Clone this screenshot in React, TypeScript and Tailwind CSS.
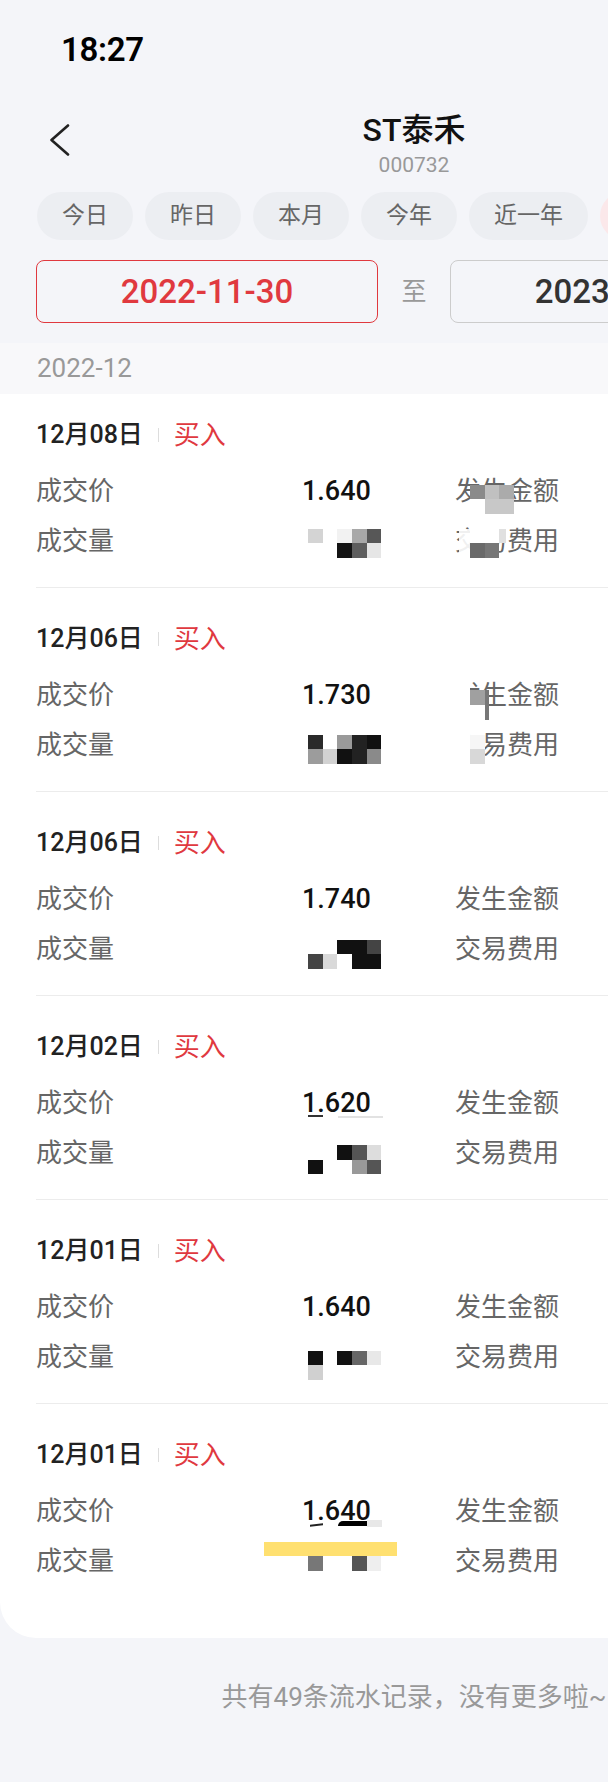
import type { ReactNode } from 'react';

type Trade = {
  date: string;
  price: string;
  amount: string;
  fee: string;
  volTop: string;
  vol: string[];
  priceMarks?: ReactNode;
  volMarks?: ReactNode;
  amountMask?: ReactNode;
  feeMask?: ReactNode;
};

const chips = ['今日', '昨日', '本月', '今年', '近一年', '自定义'];

const trades: Trade[] = [
  {
    date: '12月08日',
    price: '1.640',
    amount: '3,280.00',
    fee: '5.00',
    volTop: 'mt-[2.7px]',
    vol: ['bg-[#d4d4d4]', '', 'bg-[#f2f2f2]', 'bg-[#a8a8a8]', 'bg-[#575757]', '', '', 'bg-[#141414]', 'bg-[#5e5e5e]', 'bg-[#e6e6e6]'],
    amountMask: (
      <>
        <div className="absolute left-[15px] top-[8.6px] h-[14.7px] w-[14.7px] bg-[#8a8a8a]" />
        <div className="absolute left-[29.7px] top-[8.6px] h-[14.7px] w-[14.7px] bg-[#c0c0c0]" />
        <div className="absolute left-[44.4px] top-[8.6px] h-[14.7px] w-[14.7px] bg-[#ababab]" />
        <div className="absolute left-[15px] top-[23.3px] h-[14.7px] w-[14.7px] bg-white" />
        <div className="absolute left-[29.7px] top-[23.3px] h-[14.7px] w-[29.4px] bg-[#c8c8c8]" />
      </>
    ),
    feeMask: (
      <>
        <div className="absolute left-[4px] top-[2.7px] h-[29.4px] w-[11px] bg-white/90" />
        <div className="absolute left-[15px] top-[2.7px] h-[14.7px] w-[29.4px] bg-white" />
        <div className="absolute left-[44.4px] top-[2.7px] h-[14.7px] w-[7px] bg-[#e0e0e0]" />
        <div className="absolute left-[15px] top-[17.4px] h-[14.7px] w-[14.7px] bg-[#6a6a6a]" />
        <div className="absolute left-[29.7px] top-[17.4px] h-[14.7px] w-[14.7px] bg-[#777777]" />
      </>
    ),
  },
  {
    date: '12月06日',
    price: '1.730',
    amount: '3,460.00',
    fee: '5.00',
    volTop: 'mt-[4.5px]',
    vol: ['bg-[#2a2a2a]', '', 'bg-[#9a9a9a]', 'bg-[#222222]', 'bg-[#111111]', 'bg-[#9c9c9c]', 'bg-[#d2d2d2]', 'bg-[#111111]', 'bg-[#222222]', 'bg-[#8a8a8a]'],
    amountMask: (
      <>
        <div className="absolute left-[-2px] top-0 h-[40px] w-[17px] bg-white" />
        <div className="absolute left-[15px] top-[10.4px] h-[14.7px] w-[14.7px] bg-[#a0a0a0]" />
        <div className="absolute left-[15px] top-[25.1px] h-[14.7px] w-[14.7px] bg-white" />
        <div className="absolute left-[29.7px] top-[10.4px] h-[29.4px] w-[4px] bg-[#777777]" />
      </>
    ),
    feeMask: (
      <>
        <div className="absolute left-[-2px] top-0 h-[34px] w-[17px] bg-white" />
        <div className="absolute left-[15px] top-[4.5px] h-[14.7px] w-[14.7px] bg-[#f6f6f6]" />
        <div className="absolute left-[15px] top-[19.2px] h-[14.7px] w-[14.7px] bg-[#d8d8d8]" />
      </>
    ),
  },
  {
    date: '12月06日',
    price: '1.740',
    amount: '3,480.00',
    fee: '5.00',
    volTop: 'mt-[5.5px]',
    vol: ['', '', 'bg-[#111111]', 'bg-[#111111]', 'bg-[#444444]', 'bg-[#444444]', 'bg-[#d9d9d9]', '', 'bg-[#111111]', 'bg-[#111111]'],
  },
  {
    date: '12月02日',
    price: '1.620',
    amount: '3,240.00',
    fee: '5.00',
    volTop: 'mt-[7px]',
    vol: ['', '', 'bg-[#111111]', 'bg-[#555555]', 'bg-[#dddddd]', 'bg-[#111111]', '', '', 'bg-[#999999]', 'bg-[#555555]'],
    priceMarks: (
      <>
        <div className="absolute left-[6px] top-[27px] h-[2px] w-[15px] bg-[#333333]" />
        <div className="absolute left-[35.7px] top-[27.5px] h-[2px] w-[45px] bg-[#e2e2e2]" />
      </>
    ),
  },
  {
    date: '12月01日',
    price: '1.640',
    amount: '3,280.00',
    fee: '5.00',
    volTop: 'mt-[8.7px]',
    vol: ['bg-[#111111]', '', 'bg-[#111111]', 'bg-[#666666]', 'bg-[#e8e8e8]', 'bg-[#d0d0d0]', '', '', '', ''],
  },
  {
    date: '12月01日',
    price: '1.640',
    amount: '3,280.00',
    fee: '5.00',
    volTop: 'mt-[10px]',
    vol: ['bg-[#777777]', '', '', 'bg-[#555555]', 'bg-[#eeeeee]'],
    priceMarks: (
      <>
        <div className="absolute left-[8px] top-[28px] h-[2px] w-[13px] -skew-y-6 bg-[#222222]" />
        <div className="absolute left-[35.7px] top-[25px] h-[5px] w-[29px] rounded-tl-full bg-black" />
        <div className="absolute left-[64.7px] top-[24px] h-[7px] w-[15px] bg-[#e8e8e8]" />
      </>
    ),
    volMarks: <div className="absolute left-[-38px] top-[-4.3px] h-[14.3px] w-[132.7px] bg-[#ffe070]" />,
  },
];

function Mosaic({ cells, top }: { cells: string[]; top: string }) {
  return (
    <div className={`ml-[6px] grid grid-cols-[repeat(5,14.7px)] auto-rows-[14.7px] ${top}`}>
      {cells.map((c, i) => (
        <div key={i} className={c} />
      ))}
    </div>
  );
}

function TradeItem({ t, first, last }: { t: Trade; first: boolean; last: boolean }) {
  return (
    <div className={`${first ? 'pt-[26px]' : 'pt-[36px]'} ${last ? 'pb-[62px]' : 'pb-[31px] border-b border-[#ececec]'}`}>
      <div className="flex h-[30px] items-center">
        <span className="text-[25px] font-medium text-[#222222]">{t.date}</span>
        <span className="mx-[15px] h-[14px] w-px bg-[#dddddd]" />
        <span className="text-[26px] text-[#e0393f]">买入</span>
      </div>

      <div className="mt-[26px] grid h-[30px] grid-cols-[266px_153px_1fr] items-center">
        <span className="text-[26px] leading-[30px] text-[#666666]">成交价</span>
        <div className="relative h-[30px]">
          <span className="text-[27px] font-medium leading-[30px] text-[#111111]">{t.price}</span>
          {t.priceMarks}
        </div>
        <div className="relative flex h-[30px] justify-between">
          <span className="text-[26px] leading-[30px] text-[#666666]">发生金额</span>
          <span className="text-[27px] font-medium leading-[30px] text-[#111111]">{t.amount}</span>
          {t.amountMask}
        </div>
      </div>

      <div className="mt-[20px] grid h-[30px] grid-cols-[266px_153px_1fr] items-start">
        <span className="text-[26px] leading-[30px] text-[#666666]">成交量</span>
        <div className="relative h-[30px]">
          {t.volMarks}
          <Mosaic cells={t.vol} top={t.volTop} />
        </div>
        <div className="relative flex h-[30px] justify-between">
          <span className="text-[26px] leading-[30px] text-[#666666]">交易费用</span>
          <span className="text-[27px] font-medium leading-[30px] text-[#111111]">{t.fee}</span>
          {t.feeMask}
        </div>
      </div>
    </div>
  );
}

export default function App() {
  return (
    <div className="min-h-[1782px] w-full overflow-hidden bg-[#f4f5f9] font-['Roboto','Noto_Sans_CJK_SC',sans-serif]">
      <div className="w-[828px]">
        {/* status bar */}
        <div className="flex h-[100px] items-center pl-[61px]">
          <span className="text-[33px] font-semibold tracking-[-0.3px] text-black">18:27</span>
        </div>

        {/* nav */}
        <div className="grid h-[92px] grid-cols-[1fr_auto_1fr] items-start">
          <div className="mt-[24px] pl-[49px]">
            <svg width="22" height="32" viewBox="0 0 22 32" fill="none">
              <path d="M19 1.5 L2.5 16 L19 30.5" stroke="#222222" strokeWidth="2.6" strokeLinecap="round" strokeLinejoin="round" />
            </svg>
          </div>
          <div className="flex flex-col items-center pt-[12px]">
            <span className="text-[32px] font-medium leading-[36px] text-[#111111]">ST泰禾</span>
            <span className="mt-[6px] text-[21px] leading-[22px] text-[#999999]">000732</span>
          </div>
          <div />
        </div>

        {/* quick range chips */}
        <div className="flex h-[48px] gap-[12px] pl-[37px]">
          {chips.map((c, i) => (
            <div
              key={c}
              className={`flex h-[48px] shrink-0 items-center justify-center rounded-full text-[23px] ${
                i >= 4 ? 'w-[119px]' : 'w-[96px]'
              } ${i === 5 ? 'bg-[#fbe8ea] text-[#e0393f]' : 'bg-[#eceef2] text-[#666666]'}`}
            >
              {c}
            </div>
          ))}
        </div>

        {/* date range */}
        <div className="mt-[20px] flex h-[63px] items-center px-[36px]">
          <div className="flex h-[63px] w-[342px] items-center justify-center rounded-[8px] border border-[#e0393f] text-[33px] font-medium text-[#e0393f]">
            2022-11-30
          </div>
          <span className="flex-1 text-center text-[25px] text-[#999999]">至</span>
          <div className="flex h-[63px] w-[342px] items-center justify-center rounded-[8px] border border-[#cccccc] text-[33px] font-medium text-[#333333]">
            2023-01-05
          </div>
        </div>

        {/* month band */}
        <div className="mt-[20px] flex h-[51px] items-center bg-[#f8f8fa] pl-[37px]">
          <span className="text-[26px] text-[#999999]">2022-12</span>
        </div>

        {/* list card */}
        <div className="rounded-bl-[36px] rounded-br-[36px] bg-white px-[36px]">
          {trades.map((t, i) => (
            <TradeItem key={i} t={t} first={i === 0} last={i === trades.length - 1} />
          ))}
        </div>

        <div className="mt-[41px] text-center text-[26px] leading-[36px] text-[#999999]">
          共有49条流水记录，没有更多啦~
        </div>
      </div>
    </div>
  );
}
